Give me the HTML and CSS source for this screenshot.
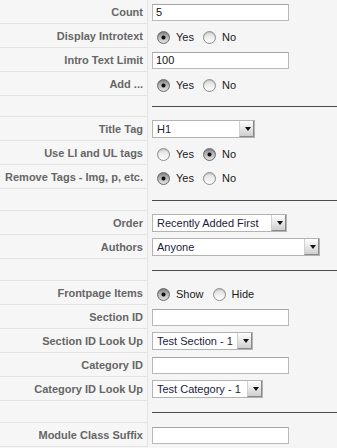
FILE: index.html
```html
<!DOCTYPE html>
<html lang="en">

<head>
    <meta charset="UTF-8">
    <meta name="viewport" content="width=device-width, initial-scale=1.0">
    <title>Module Parameters</title>
    <link rel="stylesheet" href="styles.css">
</head>

<body>
    <div class="params">
        <div class="label">Count</div>
        <div class="value"><input class="text" type="text" value="5"></div>

        <div class="label">Display Introtext</div>
        <div class="value">
            <label class="radio"><input type="radio" name="introtext" checked>Yes</label>
            <label class="radio"><input type="radio" name="introtext">No</label>
        </div>

        <div class="label">Intro Text Limit</div>
        <div class="value"><input class="text" type="text" value="100"></div>

        <div class="label">Add ...</div>
        <div class="value">
            <label class="radio"><input type="radio" name="add" checked>Yes</label>
            <label class="radio"><input type="radio" name="add">No</label>
        </div>

        <div class="label spacer short"></div>
        <div class="value spacer short"><hr></div>

        <div class="label">Title Tag</div>
        <div class="value">
            <div class="select select-title"><select><option>H1</option></select></div>
        </div>

        <div class="label">Use LI and UL tags</div>
        <div class="value">
            <label class="radio"><input type="radio" name="lists">Yes</label>
            <label class="radio"><input type="radio" name="lists" checked>No</label>
        </div>

        <div class="label">Remove Tags - Img, p, etc.</div>
        <div class="value">
            <label class="radio"><input type="radio" name="strip" checked>Yes</label>
            <label class="radio"><input type="radio" name="strip">No</label>
        </div>

        <div class="label spacer"></div>
        <div class="value spacer"><hr></div>

        <div class="label">Order</div>
        <div class="value">
            <div class="select select-order"><select><option>Recently Added First</option></select></div>
        </div>

        <div class="label">Authors</div>
        <div class="value">
            <div class="select select-authors"><select><option>Anyone</option></select></div>
        </div>

        <div class="label spacer"></div>
        <div class="value spacer"><hr></div>

        <div class="label">Frontpage Items</div>
        <div class="value">
            <label class="radio"><input type="radio" name="frontpage" checked>Show</label>
            <label class="radio"><input type="radio" name="frontpage">Hide</label>
        </div>

        <div class="label">Section ID</div>
        <div class="value"><input class="text" type="text" value=""></div>

        <div class="label">Section ID Look Up</div>
        <div class="value">
            <div class="select select-section"><select><option>Test Section - 1</option></select></div>
        </div>

        <div class="label">Category ID</div>
        <div class="value"><input class="text" type="text" value=""></div>

        <div class="label">Category ID Look Up</div>
        <div class="value">
            <div class="select select-category"><select><option>Test Category - 1</option></select></div>
        </div>

        <div class="label spacer"></div>
        <div class="value spacer"><hr></div>

        <div class="label">Module Class Suffix</div>
        <div class="value"><input class="text" type="text" value=""></div>
    </div>
</body>

</html>
```

FILE: styles.css
```css
* {
    margin: 0;
    padding: 0;
    box-sizing: border-box;
}

body {
    background: #f5f5f5;
    font-family: "Liberation Sans", Arial, sans-serif;
    font-size: 11px;
    color: #222;
}

.params {
    display: grid;
    grid-template-columns: 148px 1fr;
}

.label,
.value {
    height: 24px;
}

.params .spacer {
    height: 22px;
}

.params .spacer.short {
    height: 21px;
}

.label {
    display: flex;
    align-items: center;
    justify-content: flex-end;
    padding-right: 4px;
    background: #f6f6f6;
    border-right: 1px solid #e3e3e3;
    border-bottom: 1px solid #e3e3e3;
    font-weight: bold;
    color: #666;
    white-space: nowrap;
}

.value {
    display: flex;
    align-items: center;
    padding-left: 4px;
}

.value hr {
    border: none;
    border-top: 1px solid #4a4a4a;
    width: 100%;
}

.text {
    width: 137px;
    height: 17px;
    border: 1px solid #b9b9b9;
    border-top-color: #a4a4a4;
    background: #fff;
    font-family: "Liberation Sans", Arial, sans-serif;
    font-size: 11px;
    color: #111;
    padding: 0 3px;
    outline: none;
}

.radio {
    display: inline-flex;
    align-items: center;
    margin-right: 4px;
    margin-top: 2px;
    color: #1a1a1a;
}

.radio input {
    appearance: none;
    -webkit-appearance: none;
    width: 13px;
    height: 13px;
    margin: 0 6px 0 5px;
    border-radius: 50%;
    border: 1px solid #8c8c8c;
    background: linear-gradient(#dcdcdc, #ffffff);
    box-shadow: inset 0 1px 1px rgba(0, 0, 0, 0.15);
}

.radio input:checked {
    border-color: #6a6a6a;
    background: radial-gradient(circle, #111 0 1.6px, transparent 2.4px),
        linear-gradient(#8e8e8e, #e2e2e2);
}

.select {
    position: relative;
    height: 18px;
}

.select select {
    appearance: none;
    -webkit-appearance: none;
    width: 100%;
    height: 100%;
    border: 1px solid #b3b3b3;
    border-radius: 0;
    background: #fff;
    font-family: "Liberation Sans", Arial, sans-serif;
    font-size: 11px;
    color: #1b1b3c;
    padding: 0 16px 0 4px;
    outline: none;
}

.select::after {
    content: "";
    position: absolute;
    top: 1px;
    right: 1px;
    width: 13px;
    height: 15px;
    border-left: 1px solid #d0d0d0;
    border-right: 1px solid #8a8a8a;
    border-bottom: 1px solid #8a8a8a;
    background: linear-gradient(#ffffff, #cfcfcf);
}

.select::before {
    content: "";
    position: absolute;
    z-index: 1;
    top: 7px;
    right: 4px;
    border-left: 3px solid transparent;
    border-right: 3px solid transparent;
    border-top: 4px solid #111;
}

.select-title {
    width: 103px;
}

.select-order {
    width: 135px;
}

.select-authors {
    width: 168px;
}

.select-section {
    width: 101px;
}

.select-category {
    width: 111px;
}
```
